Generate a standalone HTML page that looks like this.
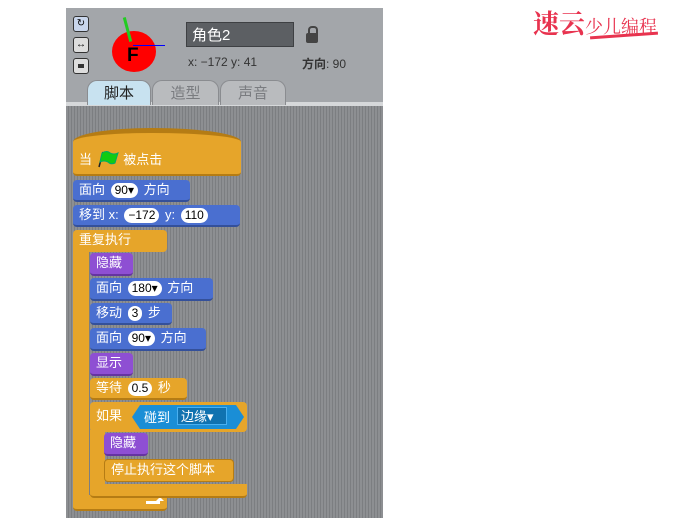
<html><head><style>
body{margin:0;width:689px;height:518px;background:#fff;position:relative;overflow:hidden;font-family:"Liberation Sans","Noto Sans CJK SC",sans-serif}
.a{position:absolute}
.hdr{left:66px;top:8px;width:317px;height:96px;background:#a3a6aa}
.scr{left:66px;top:106px;width:317px;height:412px;background:repeating-linear-gradient(90deg,#8d8f92 0 2px,#7c7e81 2px 3px)}
.b{position:absolute;color:#fff;font-size:13px;line-height:20px;padding-left:6px;box-sizing:border-box;border-radius:4px;white-space:nowrap}
.o{background:#e6a52a;border-bottom:2px solid #b57c14}
.bl{background:#4a6fd0;border-bottom:2px solid #34509a}
.p{background:#8e4fd3;border-bottom:2px solid #6534a0}
.in{display:inline-block;background:#fff;color:#000;border-radius:8px;padding:0 4px;line-height:15px;font-size:12px;margin:0 2px}
.tab{position:absolute;top:80px;height:24px;border-radius:10px 10px 0 0;font-size:15px;text-align:center;line-height:26px;color:#7a7c80;background:#b9bbbe;border:1px solid #8a8c90;border-bottom:none}
</style></head><body>
<div class="a hdr"></div>
<div class="a" style="left:66px;top:102px;width:317px;height:4px;background:#d6d8da"></div>
<div class="a scr"></div>
<div class="a" style="left:73px;top:16px;width:14px;height:14px;border:1px solid #333;border-radius:3px;background:#c9d6ec;font-size:10px;line-height:14px;text-align:center">↻</div>
<div class="a" style="left:73px;top:37px;width:14px;height:14px;border:1px solid #333;border-radius:3px;background:#ddd;font-size:10px;line-height:14px;text-align:center">↔</div>
<div class="a" style="left:73px;top:58px;width:14px;height:14px;border:1px solid #333;border-radius:3px;background:#ddd"><div class="a" style="left:4px;top:5px;width:6px;height:4px;background:#333"></div></div>
<div class="a" style="left:112px;top:31px;width:44px;height:41px;border-radius:50%;background:#f00"></div>
<div class="a" style="left:127px;top:45px;font-size:19px;font-weight:bold;color:#000">F</div>
<div class="a" style="left:126px;top:17px;width:3px;height:25px;background:#2c2;transform:rotate(-15deg)"></div>
<div class="a" style="left:133px;top:45px;width:32px;height:1px;background:#00f"></div>
<div class="a" style="left:186px;top:22px;width:108px;height:25px;background:#5c5f63;border:1px solid #3e4043;color:#fff;font-size:15px;line-height:25px;padding-left:5px;box-sizing:border-box">角色2</div>
<div class="a" style="left:306px;top:33px;width:12px;height:10px;background:#444;border-radius:2px"></div>
<div class="a" style="left:308px;top:26px;width:6px;height:8px;border:2px solid #444;border-bottom:none;border-radius:4px 4px 0 0"></div>
<div class="a" style="left:188px;top:55px;font-size:12px;color:#333">x: −172 y: 41</div>
<div class="a" style="left:302px;top:55px;font-size:12px;color:#333"><b>方向</b>: 90</div>
<div class="tab" style="left:87px;width:62px;background:#c8e2f0;color:#222">脚本</div>
<div class="tab" style="left:152px;width:65px">造型</div>
<div class="tab" style="left:220px;width:64px">声音</div>

<div class="a" style="left:73px;top:128px;width:168px;height:30px;background:#e6a52a;border-radius:80px 90px 0 0/14px 14px 0 0;border-top:5px solid #b57c14"></div>
<div class="b o" style="left:73px;top:145px;width:168px;height:31px;line-height:30px;border-radius:0 0 4px 4px">当 <svg width="24" height="18" viewBox="0 0 24 18" style="vertical-align:-4px"><path d="M3 17 L7 2" stroke="#222" stroke-width="1.5"/><path d="M6 3 Q11 0 14 3 Q18 5 22 3 L19 13 Q15 15 12 12 Q8 10 4 12 Z" fill="#1c1" stroke="#0a6" stroke-width="1"/></svg> 被点击</div>
<div class="b bl" style="left:73px;top:180px;width:117px;height:22px">面向 <span class="in">90▾</span> 方向</div>
<div class="b bl" style="left:73px;top:205px;width:167px;height:22px">移到 x: <span class="in">−172</span> y: <span class="in">110</span></div>
<div class="b o" style="left:73px;top:230px;width:94px;height:22px;border-bottom:none">重复执行</div>
<div class="a" style="left:73px;top:245px;width:16px;height:255px;background:#e6a52a"></div>
<div class="b o" style="left:73px;top:495px;width:94px;height:16px;border-radius:0 0 4px 4px"></div>
<div class="a" style="left:146px;top:501px;width:14px;height:3px;background:#fff"></div>
<div class="a" style="left:156px;top:497px;width:0;height:0;border:4px solid transparent;border-bottom:4px solid #fff;border-top:none"></div>
<div class="b p" style="left:90px;top:253px;width:43px;height:23px">隐藏</div>
<div class="b bl" style="left:90px;top:278px;width:123px;height:23px">面向 <span class="in">180▾</span> 方向</div>
<div class="b bl" style="left:90px;top:303px;width:82px;height:22px">移动 <span class="in">3</span> 步</div>
<div class="b bl" style="left:90px;top:328px;width:116px;height:23px">面向 <span class="in">90▾</span> 方向</div>
<div class="b p" style="left:90px;top:353px;width:43px;height:23px">显示</div>
<div class="b o" style="left:90px;top:378px;width:97px;height:22px">等待 <span class="in">0.5</span> 秒</div>
<div class="b o" style="left:90px;top:402px;width:157px;height:30px;line-height:28px;border-bottom:none">如果</div>
<div class="a" style="left:132px;top:405px;width:112px;height:24px;background:#1a8ed6;clip-path:polygon(8px 0,calc(100% - 8px) 0,100% 50%,calc(100% - 8px) 100%,8px 100%,0 50%)"></div>
<div class="a" style="left:144px;top:407px;color:#fff;font-size:13px">碰到</div>
<div class="a" style="left:177px;top:407px;width:50px;height:18px;background:#1072b0;border:1px solid #4ab0f0;color:#fff;font-size:13px;line-height:18px;padding-left:3px;box-sizing:border-box">边缘▾</div>
<div class="a" style="left:90px;top:430px;width:15px;height:60px;background:#e6a52a"></div>
<div class="b o" style="left:90px;top:484px;width:157px;height:14px;border-radius:0 0 4px 4px"></div>
<div class="b p" style="left:104px;top:433px;width:44px;height:23px">隐藏</div>
<div class="b o" style="left:104px;top:459px;width:130px;height:23px;border:1px solid #b57c14">停止执行这个脚本</div>

<div class="a" style="left:533px;top:4px;color:#e8334f;font-size:26px;font-weight:bold;font-family:'Noto Serif CJK SC',serif">速云<span style="font-size:18px;font-weight:normal">少儿编程</span></div>
<div class="a" style="left:590px;top:34px;width:68px;height:3px;background:#e8334f;transform:rotate(-4deg)"></div>
</body></html>
